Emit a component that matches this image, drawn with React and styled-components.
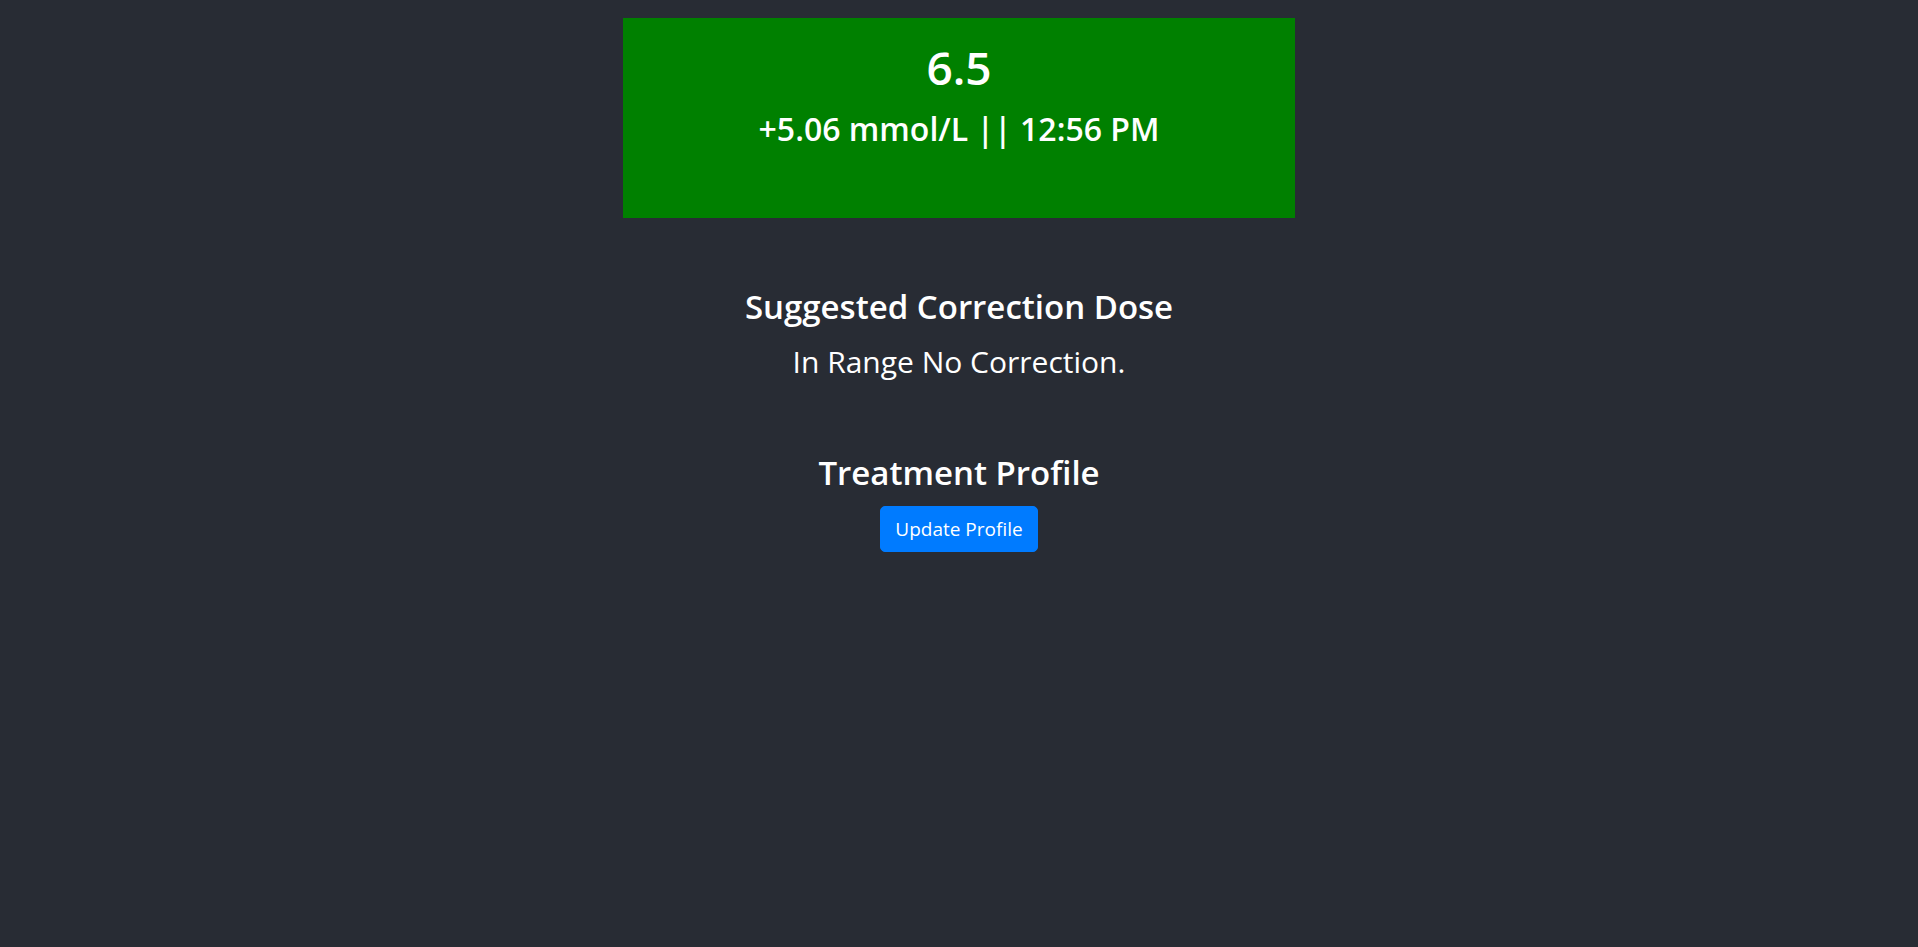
import styled, { createGlobalStyle } from "styled-components";

const GlobalStyle = createGlobalStyle`
  html, body {
    margin: 0;
    padding: 0;
    background: #282c34;
  }
  body {
    font-family: "Open Sans", "Noto Sans", Arial, sans-serif;
    color: #ffffff;
    min-height: 100vh;
  }
`;

const Page = styled.div`
  display: flex;
  flex-direction: column;
  align-items: center;
  text-align: center;
  padding-top: 18px;
  min-height: 100vh;
  box-sizing: border-box;
  background: #282c34;
`;

const ReadingCard = styled.div`
  width: 35%;
  height: 200px;
  box-sizing: border-box;
  background: ${(p) => p.$color || "#008000"};
  padding-top: 22px;
  display: flex;
  flex-direction: column;
  align-items: center;
`;

const Value = styled.div`
  font-size: 46px;
  font-weight: 600;
  line-height: 1.2;
`;

const Delta = styled.div`
  margin-top: 15px;
  font-size: 32px;
  font-weight: 600;
  line-height: 1.2;
  white-space: nowrap;
`;

const Section = styled.section`
  display: flex;
  flex-direction: column;
  align-items: center;
  margin-top: ${(p) => p.$gap || 0}px;
`;

const SectionTitle = styled.h2`
  margin: 0;
  font-size: 33px;
  font-weight: 600;
  line-height: 1.2;
`;

const SectionText = styled.p`
  margin: 17px 0 0;
  font-size: 30px;
  font-weight: 400;
  line-height: 1.2;
`;

const PrimaryButton = styled.button`
  margin-top: 14px;
  width: 158px;
  height: 46px;
  display: flex;
  align-items: center;
  justify-content: center;
  padding: 0;
  font-family: inherit;
  font-size: 19px;
  font-weight: 400;
  white-space: nowrap;
  color: #ffffff;
  background: #007bff;
  border: 1px solid #007bff;
  border-radius: 5px;
  cursor: pointer;
`;

export default function App() {
  const reading = { value: "6.5", delta: "+5.06", unit: "mmol/L", time: "12:56 PM" };

  return (
    <>
      <GlobalStyle />
      <Page>
        <ReadingCard $color="#008000">
          <Value>{reading.value}</Value>
          <Delta>
            {reading.delta} {reading.unit} || {reading.time}
          </Delta>
        </ReadingCard>

        <Section $gap={69}>
          <SectionTitle>Suggested Correction Dose</SectionTitle>
          <SectionText>In Range No Correction.</SectionText>
        </Section>

        <Section $gap={73}>
          <SectionTitle>Treatment Profile</SectionTitle>
          <PrimaryButton>Update Profile</PrimaryButton>
        </Section>
      </Page>
    </>
  );
}
